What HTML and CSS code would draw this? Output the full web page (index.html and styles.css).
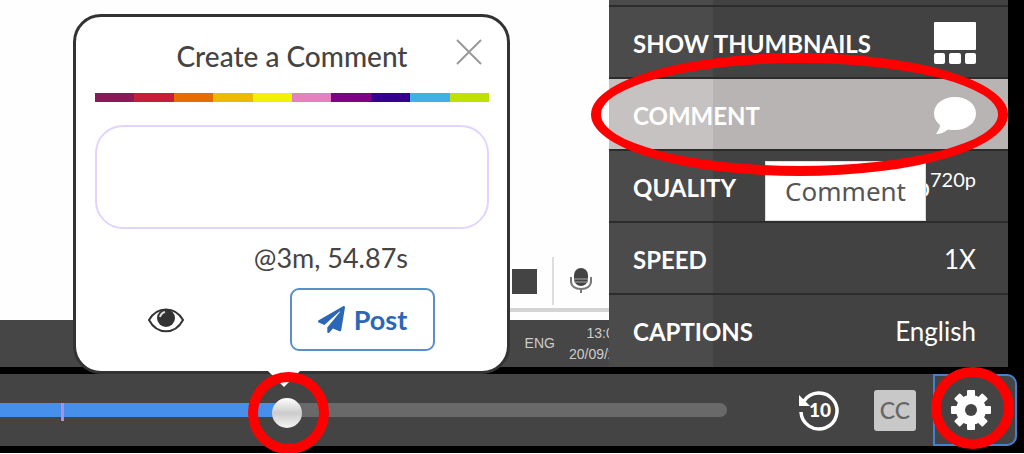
FILE: index.html
```
<!DOCTYPE html>
<html lang="en">
<head>
  <meta charset="UTF-8">
  <meta name="viewport" content="width=device-width, initial-scale=1.0">
  <title>Video Player</title>
  <link rel="stylesheet" href="styles.css">
</head>
<body>
  <main class="player">
    <div class="stage">
      <div class="screen">
        <div class="recorder">
          <span class="stop"></span>
          <span class="divider"></span>
          <svg class="mic" viewBox="0 0 24 26" aria-hidden="true">
            <rect x="5" y="0" width="14" height="18" rx="7" fill="#444"/>
            <path d="M5 11h14M5 14h14" stroke="#aaa" stroke-width="1"/>
            <path d="M2 9v4c0 5 4 8 10 8s10-3 10-8V9M12 21v4" fill="none" stroke="#777" stroke-width="2"/>
          </svg>
        </div>
        <div class="taskbar">
          <span>ENG</span>
          <span class="clock">13:07<br>20/09/2021</span>
        </div>
      </div>

      <ul class="menu">
        <li><button class="row"><b>SHOW THUMBNAILS</b>
          <svg class="row-icon" viewBox="0 0 42 42" fill="#fff" aria-hidden="true">
            <rect width="42" height="28" rx="1"/>
            <rect y="31" width="11" height="11" rx="2"/>
            <rect x="15" y="31" width="12" height="11" rx="2"/>
            <rect x="31" y="31" width="11" height="11" rx="2"/>
          </svg>
        </button></li>
        <li><button class="row active"><b>COMMENT</b>
          <svg class="row-icon" viewBox="0 0 42 42" fill="#fff" aria-hidden="true">
            <path d="M21 3C9 3 0 10 0 19.500C0 24 2 28 6 31C6 34 4 37 2 40C7 40 11 38 14 35.500C16 36 18 36 21 36C33 36 42 29 42 19.500S33 3 21 3Z"/>
          </svg>
        </button></li>
        <li><button class="row"><b>QUALITY</b><span>720p<sup>720p</sup></span></button></li>
        <li><button class="row"><b>SPEED</b><span>1X</span></button></li>
        <li><button class="row"><b>CAPTIONS</b><span>English</span></button></li>
      </ul>
      <div class="tooltip" role="tooltip">Comment</div>
    </div>

    <div class="controls">
      <div class="timeline">
        <input type="range" class="seek" min="0" max="100" value="39" aria-label="Seek">
        <span class="marker"></span>
      </div>
      <button class="icon-button" aria-label="Back 10 seconds">
        <svg class="rewind" viewBox="0 0 42 42" aria-hidden="true">
          <path d="M6 12A18 18 0 1 1 3 23" fill="none" stroke="#fff" stroke-width="3.500"/>
          <path d="M1 6v11h11z" fill="#fff"/>
          <text x="22" y="28" text-anchor="middle">10</text>
        </svg>
      </button>
      <button class="cc" aria-label="Captions">CC</button>
      <button class="settings" aria-label="Settings">
        <svg class="gear" viewBox="-20 -20 40 40" aria-hidden="true">
          <g fill="#fff">
            <g id="teeth">
              <rect x="-4" y="-20" width="8" height="40" rx="1"/>
              <rect x="-20" y="-4" width="40" height="8" rx="1"/>
            </g>
            <use href="#teeth" transform="rotate(45)"/>
            <circle r="15"/>
          </g>
          <circle r="6" fill="#444"/>
        </svg>
      </button>
    </div>

    <form class="popup">
      <button type="button" class="close" aria-label="Close">
        <svg viewBox="0 0 26 26" aria-hidden="true"><path d="M1 1l24 24M25 1L1 25" stroke="#999" stroke-width="2"/></svg>
      </button>
      <h2>Create a Comment</h2>
      <div class="colours">
        <i class="plum"></i><i class="red"></i><i class="orange"></i><i class="amber"></i><i class="yellow"></i>
        <i class="pink"></i><i class="purple"></i><i class="indigo"></i><i class="sky"></i><i class="lime"></i>
      </div>
      <textarea aria-label="Comment text"></textarea>
      <p class="time">@3m, 54.87s</p>
      <div class="actions">
        <button type="button" class="eye" aria-label="Visibility">
          <svg viewBox="0 0 38 26" aria-hidden="true">
            <path d="M2 13C10 -1 28 -1 36 13C28 28 10 28 2 13Z" fill="#fff" stroke="#333" stroke-width="2"/>
            <circle cx="19" cy="11" r="9" fill="#333"/>
            <path d="M13 10q1-4 5-5" fill="none" stroke="#ddd" stroke-width="2"/>
          </svg>
        </button>
        <button type="button" class="post">
          <svg viewBox="0 0 512 512" aria-hidden="true"><path fill="#2c67b7" d="M476 3.200L12.500 270.600c-18.100 10.400-15.800 35.600 2.200 43.200L121 358.400l287.300-253.200c5.500-4.900 13.300 2.600 8.600 8.300L176 407v80.500c0 23.600 28.500 32.900 42.500 15.800L282 426l124.600 52.200c14.200 6 30.400-2.900 33-18.200l72-432C515 7.800 493.300-6.800 476 3.200z"/></svg>
          Post
        </button>
      </div>
      <span class="arrow"></span>
    </form>

    <span class="ring ring-comment"></span>
    <span class="ring ring-seek"></span>
    <span class="ring ring-settings"></span>
  </main>
</body>
</html>
```
FILE: styles.css
```
* {
  box-sizing: border-box;
}

body {
  margin: 0;
  background: #000;
  font-family: Lato, sans-serif;
  color: #444;
}

button {
  border: 0;
  padding: 0;
  background: none;
  font: inherit;
  color: inherit;
  cursor: pointer;
}

svg {
  display: block;
}

.player {
  position: relative;
  padding-bottom: 7px;
  border-bottom: 1px solid #fff;
  overflow: hidden;
}

/* video area */
.stage {
  position: relative;
  display: flex;
  padding-right: 16px;
}

.screen {
  flex: 1;
  min-width: 0;
  display: flex;
  flex-direction: column;
  justify-content: flex-end;
  background: #fefefe;
  overflow: hidden;
}

.recorder {
  display: flex;
  align-items: center;
  align-self: flex-end;
  gap: 15px;
  height: 58px;
  margin-bottom: 8px;
  padding: 0 16px;
  border-bottom: 4px solid #d4d4d4;
}

.stop {
  width: 25px;
  height: 25px;
  background: #444;
}

.divider {
  width: 2px;
  height: 48px;
  background: #ddd;
}

.mic {
  width: 24px;
  height: 26px;
}

.taskbar {
  display: flex;
  align-items: center;
  justify-content: flex-end;
  gap: 14px;
  height: 47px;
  margin-right: -30px;
  background: #464646;
  color: #ccc;
  font: 14px/21px "Liberation Sans", sans-serif;
}

.clock {
  text-align: center;
}

/* settings menu */
.menu {
  width: 399px;
  margin: 0;
  padding: 5px 0 2px;
  list-style: none;
  background: linear-gradient(to right, #4b4b4b 104px, #424242 104px);
  color: #fff;
  font-size: 24px;
}

.row {
  display: flex;
  align-items: center;
  justify-content: space-between;
  width: 100%;
  height: 72px;
  padding: 2px 32px 0 24px;
  border-top: 2px solid #2c2c2c;
}

.row.active {
  background: linear-gradient(to right, #c6c2c1 104px, #b8b4b3 104px);
}

.row span {
  font-size: 26px;
}

.row sup {
  font-size: 20px;
  line-height: 0;
}

.row-icon {
  width: 42px;
  height: 42px;
}

.tooltip {
  position: absolute;
  top: 161px;
  right: 98px;
  padding: 12px 19px;
  border: 1px solid #ddd;
  background: #fff;
  color: #555;
  font: 26px/34px "Noto Sans", sans-serif;
}

/* control bar */
.controls {
  display: flex;
  align-items: center;
  height: 72px;
  margin: 7px 7px 0 0;
  border-radius: 0 10px 10px 0;
  background: #444;
}

.timeline {
  position: relative;
  flex: 1;
  margin-right: 71px;
}

.seek {
  appearance: none;
  display: block;
  width: 100%;
  height: 30px;
  margin: 0;
  background: none;
}

.seek::-webkit-slider-runnable-track {
  height: 14px;
  border-radius: 0 7px 7px 0;
  background: linear-gradient(to right, #468fea 39%, #696969 39%);
}

.seek::-webkit-slider-thumb {
  appearance: none;
  width: 30px;
  height: 30px;
  margin-top: -5px;
  border-radius: 50%;
  background: linear-gradient(#fff, #ccc 50%, #f4f4f4);
}

.marker {
  position: absolute;
  top: 8px;
  left: 61px;
  width: 3px;
  height: 18px;
  background: #b28ee0;
}

.rewind {
  width: 42px;
  height: 42px;
}

.rewind text {
  fill: #fff;
  font-size: 19px;
  font-weight: 900;
}

.cc {
  width: 42px;
  height: 41px;
  margin: 0 17px 0 34px;
  border-radius: 3px;
  background: #c8c8c8;
  color: #666;
  font-size: 23px;
  font-weight: 500;
}

.settings {
  width: 84px;
  height: 72px;
  padding-left: 16px;
  border: 2px solid #4380d0;
  border-radius: 0 10px 10px 0;
}

.gear {
  width: 40px;
  height: 40px;
}

/* comment popup */
.popup {
  position: absolute;
  top: 14px;
  left: 73px;
  width: 437px;
  padding: 20px 18px 20px 19px;
  border: 3px solid #333;
  border-radius: 28px;
  background: #fff;
}

.popup h2 {
  margin: 0 0 18px;
  font-size: 28px;
  font-weight: 500;
  line-height: 38px;
  text-align: center;
}

.close {
  position: absolute;
  top: 22px;
  right: 25px;
}

.close svg {
  width: 26px;
  height: 26px;
}

.colours {
  display: flex;
  height: 9px;
  margin-bottom: 23px;
}

.colours i {
  flex: 1;
}

.plum { background: #8c1858; }
.red { background: #c41e3a; }
.orange { background: #e66c00; }
.amber { background: #f0b800; }
.yellow { background: #f2f200; }
.pink { background: #e880c0; }
.purple { background: #800088; }
.indigo { background: #340090; }
.sky { background: #40b0e8; }
.lime { background: #c0e000; }

.popup textarea {
  display: block;
  width: 100%;
  height: 104px;
  padding: 16px;
  border: 2px solid #e2d4ff;
  border-radius: 28px;
  font: inherit;
  font-size: 24px;
  resize: none;
}

.time {
  margin: 11px 81px 12px 0;
  font-size: 27px;
  line-height: 36px;
  text-align: right;
}

.actions {
  display: flex;
  align-items: center;
  justify-content: space-between;
  padding: 0 54px 0 52px;
}

.eye svg {
  width: 38px;
  height: 26px;
}

.post {
  display: flex;
  align-items: center;
  justify-content: center;
  gap: 9px;
  width: 145px;
  height: 63px;
  border: 2px solid #5a8fcc;
  border-radius: 9px;
  color: #2c67b7;
  font-size: 27px;
  font-weight: bold;
}

.post svg {
  width: 27px;
  height: 27px;
}

.arrow {
  position: absolute;
  top: 100%;
  left: 192px;
  border: 16px solid transparent;
  border-top-color: #fff;
  border-bottom: 0;
}

/* highlight rings */
.ring {
  position: absolute;
  border: 10px solid #f00;
  border-radius: 50%;
  pointer-events: none;
}

.ring-comment {
  top: 53px;
  right: 16px;
  width: 417px;
  height: 123px;
}

.ring-seek {
  top: 372px;
  left: 248px;
  width: 81px;
  height: 82px;
}

.ring-settings {
  top: 367px;
  right: 10px;
  width: 83px;
  height: 82px;
}
```
